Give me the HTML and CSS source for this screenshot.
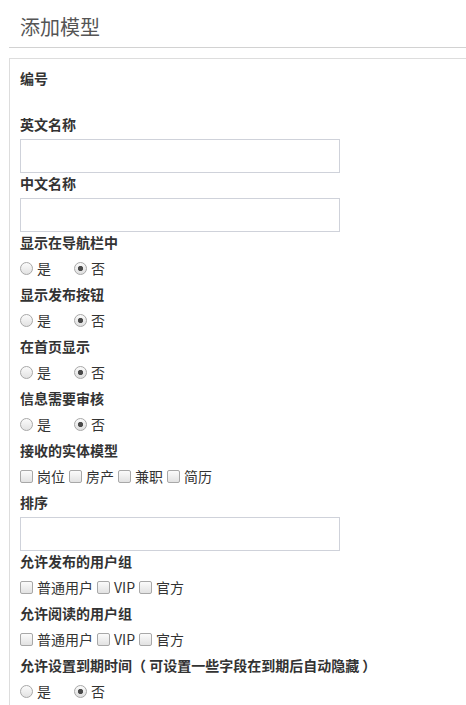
FILE: index.html
```html
<!DOCTYPE html>
<html lang="zh-CN">
<head>
<meta charset="utf-8">
<title>添加模型</title>
<link rel="stylesheet" href="styles.css">
</head>
<body>
<div class="page">
  <h2 class="title">添加模型</h2>
  <div class="panel">
    <form class="form">
      <div class="field">
        <label class="lbl">编号</label>
        <div class="static"></div>
      </div>
      <div class="field">
        <label class="lbl">英文名称</label>
        <input class="text" type="text">
      </div>
      <div class="field">
        <label class="lbl">中文名称</label>
        <input class="text" type="text">
      </div>
      <div class="field">
        <label class="lbl">显示在导航栏中</label>
        <div class="opts radios">
          <label class="opt"><input type="radio" name="nav">是</label>
          <label class="opt"><input type="radio" name="nav" checked>否</label>
        </div>
      </div>
      <div class="field">
        <label class="lbl">显示发布按钮</label>
        <div class="opts radios">
          <label class="opt"><input type="radio" name="pub">是</label>
          <label class="opt"><input type="radio" name="pub" checked>否</label>
        </div>
      </div>
      <div class="field">
        <label class="lbl">在首页显示</label>
        <div class="opts radios">
          <label class="opt"><input type="radio" name="home">是</label>
          <label class="opt"><input type="radio" name="home" checked>否</label>
        </div>
      </div>
      <div class="field">
        <label class="lbl">信息需要审核</label>
        <div class="opts radios">
          <label class="opt"><input type="radio" name="audit">是</label>
          <label class="opt"><input type="radio" name="audit" checked>否</label>
        </div>
      </div>
      <div class="field">
        <label class="lbl">接收的实体模型</label>
        <div class="opts checks">
          <label class="opt"><input type="checkbox">岗位</label>
          <label class="opt"><input type="checkbox">房产</label>
          <label class="opt"><input type="checkbox">兼职</label>
          <label class="opt"><input type="checkbox">简历</label>
        </div>
      </div>
      <div class="field">
        <label class="lbl">排序</label>
        <input class="text" type="text">
      </div>
      <div class="field">
        <label class="lbl">允许发布的用户组</label>
        <div class="opts checks">
          <label class="opt"><input type="checkbox">普通用户</label>
          <label class="opt"><input type="checkbox">VIP</label>
          <label class="opt"><input type="checkbox">官方</label>
        </div>
      </div>
      <div class="field">
        <label class="lbl">允许阅读的用户组</label>
        <div class="opts checks">
          <label class="opt"><input type="checkbox">普通用户</label>
          <label class="opt"><input type="checkbox">VIP</label>
          <label class="opt"><input type="checkbox">官方</label>
        </div>
      </div>
      <div class="field">
        <label class="lbl">允许设置到期时间（ 可设置一些字段在到期后自动隐藏 ）</label>
        <div class="opts radios">
          <label class="opt"><input type="radio" name="expire">是</label>
          <label class="opt"><input type="radio" name="expire" checked>否</label>
        </div>
      </div>
    </form>
  </div>
</div>
</body>
</html>
```

FILE: styles.css
```css
html, body {
  margin: 0;
  padding: 0;
  overflow: hidden;
  background: #fff;
}

body {
  font-family: "Noto Sans CJK SC", "Noto Sans", sans-serif;
  font-size: 14px;
  color: #333;
}

.page {
  margin-left: 9px;
}

.title {
  margin: 0;
  padding: 14px 0 7px 11px;
  font-size: 20px;
  line-height: 26px;
  font-weight: normal;
  color: #555;
  border-bottom: 1px solid #d2d2d2;
}

.panel {
  margin-top: 10px;
  border: 1px solid #dddddd;
  border-right: none;
  padding: 9px 0 20px 10px;
}

.form {
  display: flex;
  flex-direction: column;
}

.field {
  display: flex;
  flex-direction: column;
  align-items: flex-start;
}

.lbl {
  display: block;
  font-weight: bold;
  line-height: 20px;
  margin-bottom: 5px;
  color: #333;
  white-space: nowrap;
}

.static {
  height: 21px;
}

.text {
  display: block;
  box-sizing: border-box;
  width: 320px;
  height: 34px;
  margin: 0;
  padding: 6px 10px;
  border: 1px solid #cfd2da;
  border-radius: 0;
  background: #fff;
  font: inherit;
}

.opts {
  display: flex;
  align-items: center;
  line-height: 20px;
  margin: 1px 0 6px;
  color: #333;
}

.radios {
  gap: 23px;
}

.checks {
  gap: 4px;
}

.opt {
  display: inline-flex;
  align-items: center;
  font-weight: normal;
}

.opt input {
  -webkit-appearance: none;
  appearance: none;
  box-sizing: border-box;
  width: 13px;
  height: 13px;
  margin: 0 4px 0 0;
  border: 1px solid #a8a8a8;
  background: linear-gradient(#fbfbfb, #e2e2e2);
}

.opt input[type="radio"] {
  border-radius: 50%;
}

.opt input[type="radio"]:checked {
  background: radial-gradient(circle, #4a4a4a 0 2.2px, transparent 3px), linear-gradient(#fbfbfb, #dedede);
}

.opt input[type="checkbox"] {
  border-radius: 2px;
}
```
